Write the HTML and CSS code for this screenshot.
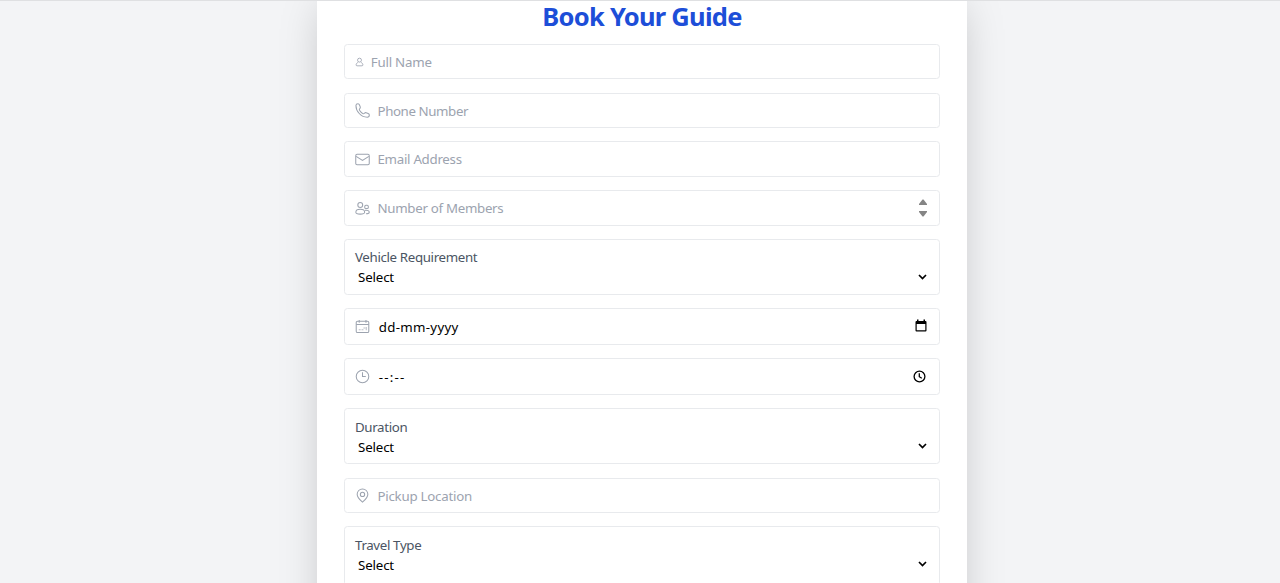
FILE: index.html
```html
<!DOCTYPE html>
<html lang="en">
<head>
<meta charset="utf-8">
<title>Book Your Guide</title>
<link rel="stylesheet" href="styles.css">
</head>
<body>
<main class="page">
<form class="card">
<h1 class="title">Book Your Guide</h1>
<div class="field">
<svg class="icon icon-small" viewBox="0 0 16 16"><circle cx="8" cy="4.7" r="3.5"/><path d="M5.200 8.600C3.300 9.700 2 11.400 2 13.200c0 1 .6 1.600 1.600 1.600h8.800c1 0 1.600-.6 1.600-1.600 0-1.800-1.300-3.500-3.200-4.600"/></svg>
<span class="hint t-name">Full Name</span>
</div>
<div class="field">
<svg class="icon" viewBox="0 0 16 16"><path d="M1 2.600C1 1.400 2 .8 3.200.8c.9 0 1.300.5 1.600 1.300l.8 2.100c.3.8.1 1.300-.5 1.800-.7.6-.7 1-.3 1.700 1 1.600 2.100 2.700 3.600 3.600.7.4 1.100.3 1.700-.4.5-.6 1-.8 1.800-.5l2.100.8c.8.3 1.300.8 1.300 1.700 0 1.300-1 2.200-2.300 2.200C6.400 15.100 1 8.800 1 2.600z"/></svg>
<span class="hint t-phone">Phone Number</span>
</div>
<div class="field">
<svg class="icon" viewBox="0 0 16 16"><rect x=".8" y="2.500" width="14.400" height="11.200" rx="1.400"/><path d="M1.200 4.600 8 9l6.800-4.400"/></svg>
<span class="hint t-email">Email Address</span>
</div>
<div class="field">
<svg class="icon" viewBox="0 0 16 16"><circle cx="5.600" cy="4.300" r="2.600"/><rect x="10.400" y="4.500" width="3.800" height="3.600" rx="1.300"/><path d="M5.600 8.800c-2.700 0-4.700 1.300-4.700 3.100 0 1.300 1.600 2.100 4.700 2.100s4.700-.8 4.700-2.100c0-1.800-2-3.100-4.700-3.100zM10.800 10c2.700-.5 4.400.6 4.400 2 0 1.100-1.200 1.600-3.400 1.600"/></svg>
<span class="hint t-members">Number of Members</span>
<svg class="spinner" viewBox="0 0 8 18"><path d="M3.500.5h1L8 5v1H0V5zM3.500 17.500h1L8 13v-1H0v1z"/></svg>
</div>
<div class="field select">
<label class="label">Vehicle Requirement</label>
<div class="choice"><span class="value">Select</span><svg class="chevron" viewBox="0 0 9 6"><path d="m1 1 3.500 3.500L8 1"/></svg></div>
</div>
<div class="field picker">
<svg class="icon" viewBox="0 0 16 16"><rect x="1.300" y="2.300" width="13.400" height="12.200" rx="1.500"/><path d="M1.300 5.800h13.400M4.500 1v3M11.700 1v3"/><path class="faint" d="M4 11.500h2M7 11.500h2M9 9.500h2M12 8.500V12"/></svg>
<span class="value t-date">dd-mm-yyyy</span>
<svg class="calendar" viewBox="0 0 12 13"><path fill-rule="evenodd" d="M2 .5h1.500V2h5V.5H10V2h.5q1 0 1 1v8.500q0 1-1 1h-9q-1 0-1-1V3q0-1 1-1H2zM1.700 5v6.300h8.600V5z"/></svg>
</div>
<div class="field picker">
<svg class="icon" viewBox="0 0 16 16"><circle cx="8" cy="8" r="6.700"/><path d="M8 3.500V8h3.500"/></svg>
<span class="value t-time">--:--</span>
<svg class="clock" viewBox="0 0 13 13"><circle cx="6.500" cy="6.500" r="5.400"/><path d="M6.300 3.300v3.400L8.800 8.200"/></svg>
</div>
<div class="field select">
<label class="label">Duration</label>
<div class="choice"><span class="value">Select</span><svg class="chevron" viewBox="0 0 9 6"><path d="m1 1 3.500 3.500L8 1"/></svg></div>
</div>
<div class="field">
<svg class="icon" viewBox="0 0 16 16"><path d="M8 15C6.500 13.700 2.300 10.700 2.300 6.700a5.700 5.700 0 0 1 11.400 0C13.700 10.700 9.500 13.700 8 15z"/><circle cx="8" cy="6.800" r="2.300"/></svg>
<span class="hint t-pickup">Pickup Location</span>
</div>
<div class="field select last">
<label class="label">Travel Type</label>
<div class="choice"><span class="value">Select</span><svg class="chevron" viewBox="0 0 9 6"><path d="m1 1 3.500 3.500L8 1"/></svg></div>
</div>
</form>
</main>
</body>
</html>
```
FILE: styles.css
```css
* { box-sizing: border-box; }
body {
  margin: 0;
  height: 583px;
  overflow: hidden;
  background: #f3f4f6;
  font-family: "Noto Sans", "Open Sans", sans-serif;
}
.page {
  height: 583px;
  overflow: hidden;
  border-top: 1px solid #dfe0e2;
}
.card {
  width: 650px;
  height: 760px;
  margin: -24px 0 0 317px;
  padding: 24px 27px 0;
  display: flex;
  flex-direction: column;
  gap: 13.250px;
  background: #fff;
  box-shadow: 0 21px 42px -10px rgba(0, 0, 0, .25);
}
.title {
  flex: none;
  height: 29.500px;
  margin: 0;
  text-align: center;
  color: #1d4ed8;
  font: 700 25.500px/31px "Noto Sans", sans-serif;
  letter-spacing: -.75px;
  white-space: nowrap;
}
.field {
  flex: none;
  height: 35.500px;
  padding: .5px 12px 0 10px;
  display: flex;
  align-items: center;
  border: 1px solid #e8eaed;
  border-radius: 3.500px;
  font-size: 13.300px;
  line-height: 20px;
  white-space: nowrap;
}
.picker { height: 36.900px; }
.select {
  height: 56px;
  padding-top: 7.300px;
  flex-direction: column;
  align-items: stretch;
  justify-content: flex-start;
}
.last { height: 60px; }
.icon {
  width: 15px;
  height: 15px;
  margin: 0 7.300px 0 .2px;
  fill: none;
  stroke: #9ca3af;
  stroke-width: 1.100;
}
.icon-small { width: 9px; height: 10px; margin-right: 6.500px; stroke-width: 1.500; }
.faint { opacity: .7; }
.hint { color: #9ca3af; }
.label { color: #4b5563; letter-spacing: -.35px; }
.value { color: #000; letter-spacing: -.15px; }
.t-name { letter-spacing: -.2px; }
.t-phone { letter-spacing: -.4px; }
.t-email { letter-spacing: -.28px; }
.t-members { letter-spacing: -.3px; }
.t-pickup { letter-spacing: -.25px; }
.t-date { letter-spacing: .3px; padding-left: 1.300px; }
.t-time { letter-spacing: 1.200px; padding-left: 1.300px; }
.choice {
  display: flex;
  align-items: center;
  justify-content: space-between;
  padding-left: 3px;
}
.chevron { width: 9px; height: 6px; margin-top: -1px; fill: none; stroke: #000; stroke-width: 1.700; }
.spinner { width: 8px; height: 18px; margin: -1px 0 0 auto; fill: #858585; }
.calendar { width: 12px; height: 13px; margin: -2px 0 0 auto; }
.clock { width: 13px; height: 13px; margin: -1px 1px 0 auto; fill: none; stroke: #000; stroke-width: 1.300; }
```
